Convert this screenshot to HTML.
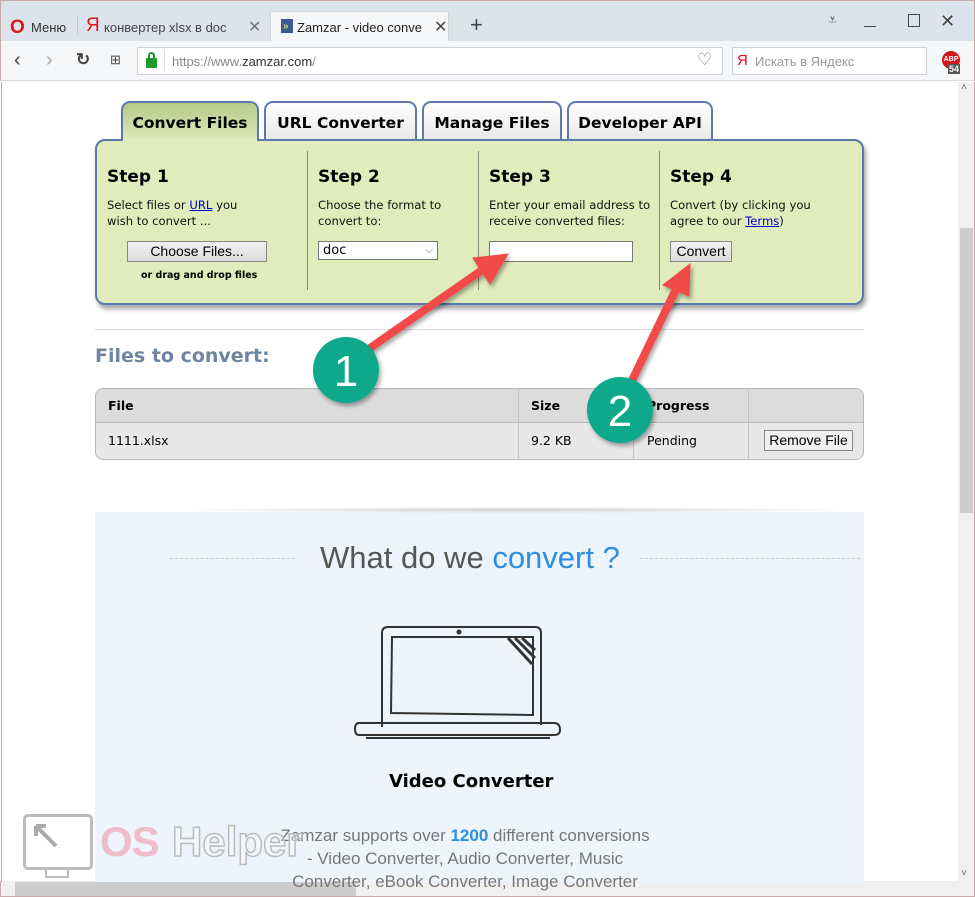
<!DOCTYPE html>
<html><head><meta charset="utf-8"><style>
*{margin:0;padding:0;box-sizing:border-box}
body{width:975px;height:897px;overflow:hidden;font-family:"Liberation Sans","DejaVu Sans",sans-serif;background:#fff;position:relative}
.a{position:absolute}
.tab{position:absolute;top:101px;height:40px;border:2px solid #5b79ad;border-bottom:none;border-radius:9px 9px 0 0;background:linear-gradient(#fff,#e8e8e8);font:bold 15.5px "DejaVu Sans",sans-serif;text-align:center;line-height:40px;color:#000}
.step{position:absolute;top:167px;font:bold 17px "DejaVu Sans",sans-serif}
.st{position:absolute;top:197px;font:11.6px/16px "DejaVu Sans",sans-serif;color:#111}
.btn{position:absolute;border:1px solid #888;background:linear-gradient(#f2f2f2,#dcdcdc);font:13px "Liberation Sans",sans-serif;text-align:center}
.cell{position:absolute;font:12.5px "DejaVu Sans",sans-serif}
</style></head><body>
<!-- browser chrome -->
<div class="a" style="left:0;top:0;width:975px;height:41px;background:#dde3ea;border:1px solid #c9a9a9;border-bottom:none"></div>
<div class="a" style="left:10px;top:17px;color:#e0141e;font:bold 19px 'Liberation Sans'">O</div>
<div class="a" style="left:31px;top:20px;font:13px 'Liberation Sans';color:#333">Меню</div>
<div class="a" style="left:77px;top:16px;width:1px;height:18px;background:#c5cad0"></div>
<div class="a" style="left:86px;top:15px;color:#e0141e;font:19px 'Liberation Sans'">Я</div>
<div class="a" style="left:104px;top:20px;font:13px 'Liberation Sans';color:#444;width:125px;overflow:hidden;white-space:nowrap">конвертер xlsx в doc — Я</div>
<div class="a" style="left:248px;top:17px;font:16px 'Liberation Sans';color:#777">✕</div>
<div class="a" style="left:270px;top:11px;width:179px;height:30px;background:#f4f6f8;border:1px solid #d0d5da;border-bottom:none"></div>
<div class="a" style="left:281px;top:19px;width:12px;height:14px;background:#3a5b8c"></div>
<div class="a" style="left:283px;top:21px;color:#cfe27a;font:bold 10px 'Liberation Sans'">»</div>
<div class="a" style="left:297px;top:20px;font:13px 'Liberation Sans';color:#222;width:125px;overflow:hidden;white-space:nowrap">Zamzar - video converter, a</div>
<div class="a" style="left:434px;top:17px;font:16px 'Liberation Sans';color:#444">✕</div>
<div class="a" style="left:470px;top:12px;font:22px 'Liberation Sans';color:#444">+</div>
<div class="a" style="left:828px;top:12px;font:16px 'Liberation Sans';color:#555">⩡</div>
<div class="a" style="left:864px;top:26px;width:12px;height:1px;background:#444"></div>
<div class="a" style="left:908px;top:14px;width:12px;height:13px;border:1px solid #444"></div>
<div class="a" style="left:940px;top:11px;font:18px 'Liberation Sans';color:#444">✕</div>
<div class="a" style="left:0;top:41px;width:975px;height:40px;background:#f4f6f8;border-left:1px solid #c9a9a9;border-right:1px solid #c9a9a9;border-bottom:1px solid #d5d8dc"></div>
<div class="a" style="left:14px;top:49px;font:20px 'Liberation Sans';color:#444">‹</div>
<div class="a" style="left:46px;top:49px;font:20px 'Liberation Sans';color:#aaa">›</div>
<div class="a" style="left:76px;top:50px;font:bold 17px 'Liberation Sans';color:#444">↻</div>
<div class="a" style="left:110px;top:52px;font:13px 'Liberation Sans';color:#444">⊞</div>
<div class="a" style="left:137px;top:47px;width:586px;height:28px;background:#fff;border:1px solid #cfd3d8"></div>
<div class="a" style="left:146px;top:58px;width:11px;height:10px;background:#1a9a2a;border-radius:1px"></div>
<div class="a" style="left:148px;top:52px;width:7px;height:8px;border:2px solid #1a9a2a;border-bottom:none;border-radius:4px 4px 0 0"></div>
<div class="a" style="left:164px;top:51px;width:1px;height:20px;background:#ddd"></div>
<div class="a" style="left:172px;top:54px;font:13px 'Liberation Sans';color:#888">https://www.<span style="color:#333">zamzar.com</span>/</div>
<div class="a" style="left:697px;top:50px;font:17px 'Liberation Sans';color:#777">♡</div>
<div class="a" style="left:732px;top:47px;width:195px;height:28px;background:#fff;border:1px solid #cfd3d8"></div>
<div class="a" style="left:737px;top:52px;color:#e0141e;font:15px 'Liberation Sans'">Я</div>
<div class="a" style="left:755px;top:54px;font:13px 'Liberation Sans';color:#999">Искать в Яндекс</div>
<div class="a" style="left:942px;top:51px;width:18px;height:18px;border-radius:50%;background:#d0161e;color:#fff;font:bold 7px 'Liberation Sans';text-align:center;line-height:18px">ABP</div>
<div class="a" style="left:948px;top:64px;background:#555;color:#fff;font:bold 9px 'Liberation Sans';padding:0 1px">54</div>
<!-- scrollbars -->
<div class="a" style="left:958px;top:82px;width:16px;height:800px;background:#f0f0f0"></div>
<div class="a" style="left:960px;top:228px;width:13px;height:285px;background:#cdcdcd"></div>
<div class="a" style="left:961px;top:82px;font:10px 'Liberation Sans';color:#666">˄</div>
<div class="a" style="left:961px;top:868px;font:10px 'Liberation Sans';color:#666">˅</div>
<div class="a" style="left:0;top:881px;width:975px;height:16px;background:#f0f0f0;border:1px solid #c9a9a9;border-top:none"></div>
<div class="a" style="left:15px;top:882px;width:341px;height:14px;background:#cdcdcd"></div>
<div class="a" style="left:1px;top:82px;width:1px;height:800px;background:#c9a9a9"></div>
<div class="a" style="left:974px;top:82px;width:1px;height:800px;background:#c9a9a9"></div>

<!-- tabs -->
<div class="tab" style="left:121px;width:138px;height:42px;background:linear-gradient(#b7c98a,#e0ecbb)">Convert Files</div>
<div class="tab" style="left:264px;width:153px">URL Converter</div>
<div class="tab" style="left:422px;width:140px">Manage Files</div>
<div class="tab" style="left:567px;width:146px">Developer API</div>
<!-- panel -->
<div class="a" style="left:95px;top:139px;width:769px;height:166px;background:#e0ecbb;border:2px solid #5b79ad;border-radius:10px;box-shadow:2px 4px 5px rgba(0,0,0,.35)"></div>
<div class="a" style="left:123px;top:138px;width:134px;height:4px;background:#e0ecbb"></div>
<div class="a" style="left:307px;top:151px;width:1px;height:139px;background:#8a8a7a"></div>
<div class="a" style="left:478px;top:151px;width:1px;height:139px;background:#8a8a7a"></div>
<div class="a" style="left:659px;top:151px;width:1px;height:139px;background:#8a8a7a"></div>
<div class="step" style="left:107px">Step 1</div>
<div class="step" style="left:318px">Step 2</div>
<div class="step" style="left:489px">Step 3</div>
<div class="step" style="left:670px">Step 4</div>
<div class="st" style="left:107px">Select files or <u style="color:#00c">URL</u> you<br>wish to convert ...</div>
<div class="st" style="left:318px">Choose the format to<br>convert to:</div>
<div class="st" style="left:489px">Enter your email address to<br>receive converted files:</div>
<div class="st" style="left:670px">Convert (by clicking you<br>agree to our <u style="color:#00c">Terms</u>)</div>
<div class="btn" style="left:127px;top:241px;width:140px;height:21px;line-height:19px;font-size:14px">Choose Files...</div>
<div class="a" style="left:141px;top:270px;font:bold 9.5px 'DejaVu Sans'">or drag and drop files</div>
<div class="a" style="left:318px;top:241px;width:120px;height:19px;background:#fff;border:1px solid #777;font:13px 'DejaVu Sans';padding-left:4px;line-height:17px">doc<span style="position:absolute;right:4px;color:#666;font-size:10px">⌵</span></div>
<div class="a" style="left:489px;top:241px;width:144px;height:21px;background:#fff;border:1px solid #777"></div>
<div class="btn" style="left:670px;top:241px;width:62px;height:21px;line-height:19px;font-size:14px">Convert</div>

<div class="a" style="left:95px;top:329px;width:769px;height:1px;background:#ddd"></div>
<div class="a" style="left:95px;top:345px;font:bold 19px 'DejaVu Sans';color:#6e84a0">Files to convert:</div>
<!-- table -->
<div class="a" style="left:95px;top:388px;width:769px;height:72px;border:1px solid #b8b8b8;border-radius:8px;overflow:hidden;background:#e8e8e8">
<div style="height:34px;background:#dcdcdc;border-bottom:1px solid #b8b8b8"></div>
<div class="a" style="left:422px;top:0;width:1px;height:72px;background:#c4c4c4"></div>
<div class="a" style="left:537px;top:0;width:1px;height:72px;background:#c4c4c4"></div>
<div class="a" style="left:652px;top:0;width:1px;height:72px;background:#c4c4c4"></div>
</div>
<div class="cell" style="left:108px;top:398px;font-weight:bold">File</div>
<div class="cell" style="left:531px;top:398px;font-weight:bold">Size</div>
<div class="cell" style="left:647px;top:398px;font-weight:bold">Progress</div>
<div class="cell" style="left:108px;top:433px">1111.xlsx</div>
<div class="cell" style="left:531px;top:433px">9.2 KB</div>
<div class="cell" style="left:647px;top:433px">Pending</div>
<div class="btn" style="left:764px;top:430px;width:89px;height:21px;line-height:19px;font-size:14px;background:#f0f0f0">Remove File</div>

<!-- blue section -->
<div class="a" style="left:95px;top:512px;width:769px;height:370px;background:#edf4fb"></div>
<div class="a" style="left:170px;top:507px;width:690px;height:6px;background:radial-gradient(ellipse at center,#ccc,transparent 70%)"></div>
<div class="a" style="left:170px;top:558px;width:125px;border-top:1px dashed #ccc"></div>
<div class="a" style="left:640px;top:558px;width:220px;border-top:1px dashed #ccc"></div>
<div class="a" style="left:320px;top:540px;font:31px 'Liberation Sans';color:#555">What do we <span style="color:#2e8ee0">convert ?</span></div>
<svg class="a" style="left:350px;top:620px" width="215" height="125" viewBox="0 0 215 125" fill="none" stroke="#333" stroke-width="2">
<path d="M32 107 V13 Q32 7 38 7 H185 Q191 7 191 13 V105"/>
<path d="M42 17 H183 V95 L41 93 Z"/>
<path d="M7 103 H204 Q210 103 210 110 Q210 115 204 115 H9 Q5 115 5 109 Q5 103 9 103 Z"/>
<path d="M16 118 H200"/>
<path d="M158 18 L182 44 M165 18 L185 38 M172 18 L185 30" stroke-width="3"/>
<circle cx="109" cy="12" r="1.5" fill="#333"/>
</svg>
<div class="a" style="left:389px;top:771px;font:bold 18px 'DejaVu Sans'">Video Converter</div>
<div class="a" style="left:230px;top:824px;width:470px;text-align:center;font:17px/23px 'Liberation Sans';color:#777">Zamzar supports over <b style="color:#2e8ee0">1200</b> different conversions<br>- Video Converter, Audio Converter, Music<br>Converter, eBook Converter, Image Converter</div>

<!-- watermark -->
<div class="a" style="left:23px;top:814px;width:70px;height:56px;border:3px solid #bbb;border-radius:5px;background:rgba(255,255,255,.6)"></div>
<div class="a" style="left:45px;top:870px;width:24px;height:8px;border:2px solid #bbb;border-top:none"></div>
<svg class="a" style="left:30px;top:820px" width="30" height="30"><path d="M26 26 L6 6 M6 6 L6 16 M6 6 L16 6" stroke="#aaa" stroke-width="4" fill="none"/></svg>
<div class="a" style="left:100px;top:818px;font:bold 42px 'Liberation Sans';color:rgba(240,150,170,.6);letter-spacing:-1px">OS</div>
<div class="a" style="left:172px;top:818px;font:bold 42px 'Liberation Sans';color:rgba(255,255,255,.4);-webkit-text-stroke:1.5px #bbb">Helper</div>

<!-- arrows & circles -->
<svg class="a" style="left:0;top:0" width="975" height="897">
<defs><filter id="s"><feDropShadow dx="2" dy="3" stdDeviation="2" flood-opacity=".35"/></filter></defs>
<g filter="url(#s)" fill="#f24a4a" stroke="#f24a4a">
<line x1="360" y1="355" x2="485" y2="268" stroke-width="8"/>
<polygon points="508,254 473,258 490,284"/>
<line x1="625" y1="395" x2="678" y2="285" stroke-width="8"/>
<polygon points="690,264 663,285 689,296"/>
</g>
<g filter="url(#s)"><circle cx="346" cy="370" r="33" fill="#0aa98a"/><circle cx="620" cy="410" r="33" fill="#0aa98a"/></g>
<text x="346" y="386" text-anchor="middle" font-family="Liberation Sans" font-size="44" fill="#fff">1</text>
<text x="620" y="426" text-anchor="middle" font-family="Liberation Sans" font-size="44" fill="#fff">2</text>
</svg>
</body></html>
